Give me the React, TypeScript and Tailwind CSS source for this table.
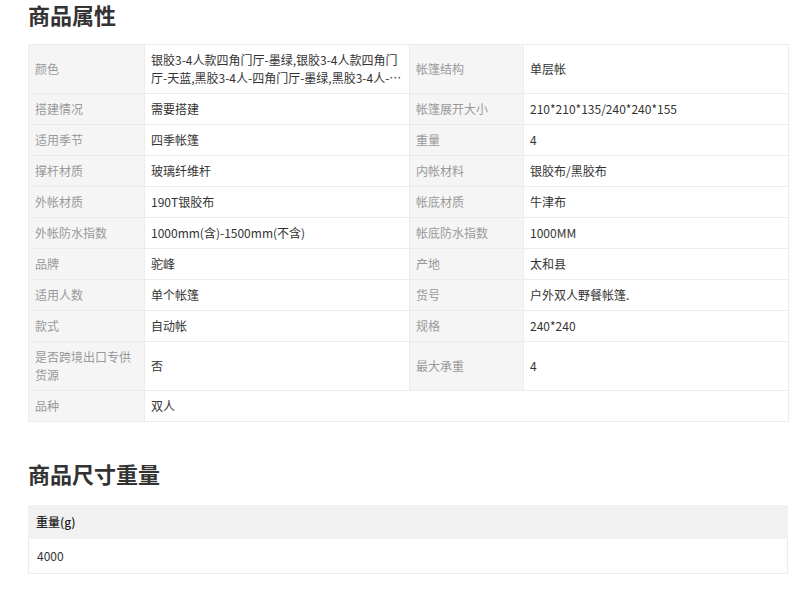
import React from "react";

const rows: [string, string, string?, string?][] = [
  [
    "颜色",
    "银胶3-4人款四角门厅-墨绿,银胶3-4人款四角门厅-天蓝,黑胶3-4人-四角门厅-墨绿,黑胶3-4人-四角门厅-天蓝",
    "帐篷结构",
    "单层帐",
  ],
  ["搭建情况", "需要搭建", "帐篷展开大小", "210*210*135/240*240*155"],
  ["适用季节", "四季帐篷", "重量", "4"],
  ["撑杆材质", "玻璃纤维杆", "内帐材料", "银胶布/黑胶布"],
  ["外帐材质", "190T银胶布", "帐底材质", "牛津布"],
  ["外帐防水指数", "1000mm(含)-1500mm(不含)", "帐底防水指数", "1000MM"],
  ["品牌", "驼峰", "产地", "太和县"],
  ["适用人数", "单个帐篷", "货号", "户外双人野餐帐篷."],
  ["款式", "自动帐", "规格", "240*240"],
  ["是否跨境出口专供货源", "否", "最大承重", "4"],
  ["品种", "双人"],
];

const font = {
  fontFamily: '"Noto Sans CJK SC", "Noto Sans", sans-serif',
};

export default function App() {
  return (
    <div className="bg-white w-[807px] h-[603px] overflow-hidden" style={font}>
      <div className="ml-[28px] w-[760px]">
        <h2 className="text-[22px] leading-[28px] font-bold text-[#333]">商品属性</h2>
        <table className="mt-[16px] w-[760px] table-fixed border-collapse text-[12px] leading-[18px]">
          <colgroup>
            <col className="w-[116px]" />
            <col className="w-[265px]" />
            <col className="w-[114px]" />
            <col className="w-[265px]" />
          </colgroup>
          <tbody>
            {rows.map((r, i) => (
              <tr key={i}>
                <td className="border border-[#ececec] bg-[#f5f5f5] text-[#999] px-[6px] py-[6px] align-middle">
                  {r[0]}
                </td>
                {r.length === 2 ? (
                  <td
                    colSpan={3}
                    className="border border-[#ececec] text-[#333] px-[6px] py-[6px] align-middle"
                  >
                    {r[1]}
                  </td>
                ) : (
                  <>
                    <td className="border border-[#ececec] text-[#333] px-[6px] py-[6px] align-middle">
                      <div className="line-clamp-2 break-all">{r[1]}</div>
                    </td>
                    <td className="border border-[#ececec] bg-[#f5f5f5] text-[#999] px-[6px] py-[6px] align-middle">
                      {r[2]}
                    </td>
                    <td className="border border-[#ececec] text-[#333] px-[6px] py-[6px] align-middle">
                      {r[3]}
                    </td>
                  </>
                )}
              </tr>
            ))}
          </tbody>
        </table>

        <h2 className="mt-[37px] text-[22px] leading-[28px] font-bold text-[#333]">商品尺寸重量</h2>
        <div className="mt-[18px] w-[760px] text-[12px]">
          <div className="h-[34px] bg-[#f1f1f1] flex items-center px-[8px] text-[#222] font-medium">
            重量(g)
          </div>
          <div className="h-[35px] border-x border-b border-[#ececec] flex items-center px-[8px] text-[#333]">
            4000
          </div>
        </div>
      </div>
    </div>
  );
}
